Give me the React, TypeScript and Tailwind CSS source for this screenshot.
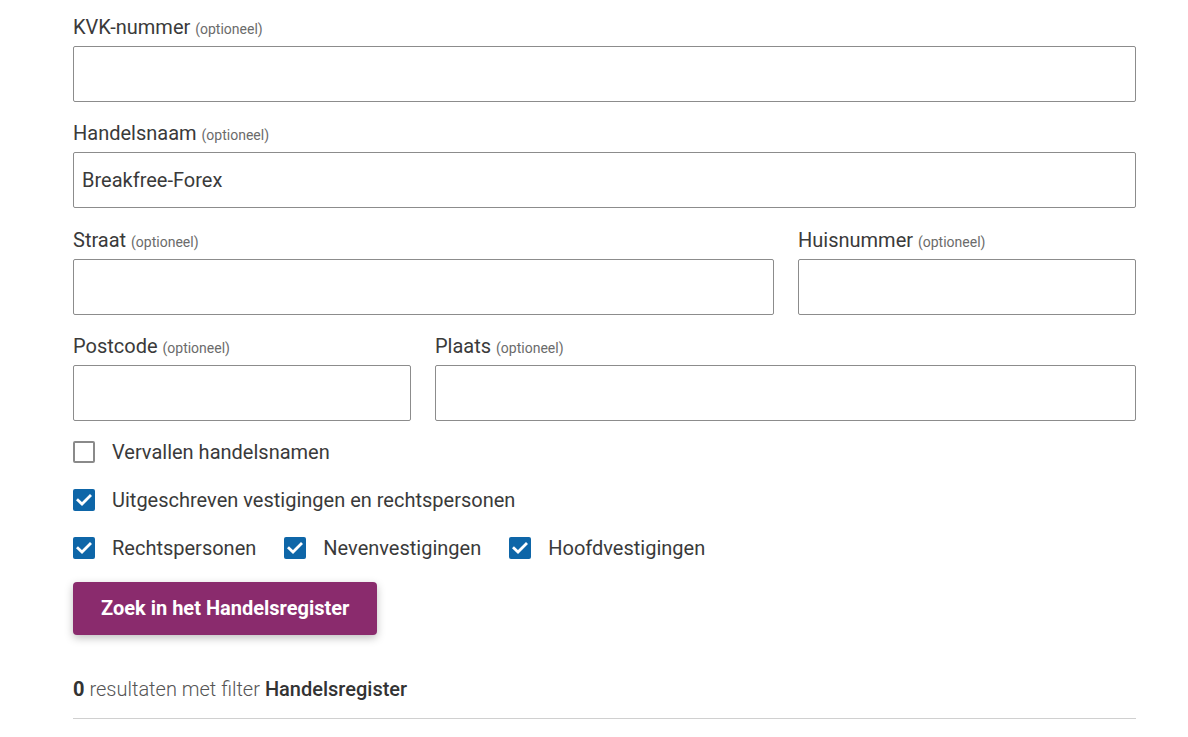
import { useState } from 'react';

const font = { fontFamily: 'Roboto, "Liberation Sans", Arial, sans-serif' };

function Field({ label, value = '' }: { label: string; value?: string }) {
  return (
    <div className="flex flex-col">
      <label className="h-6 leading-6 text-[20px] text-[#3a3a3a]">
        {label} <span className="text-[14px] text-[#6b6b6b]">(optioneel)</span>
      </label>
      <input
        type="text"
        defaultValue={value}
        className="mt-[7px] h-[56px] w-full rounded-[2px] border border-[#8c8c8c] bg-white px-2 text-[20px] text-[#3a3a3a] focus:outline-none"
      />
    </div>
  );
}

function Check({ label, initial }: { label: string; initial: boolean }) {
  const [checked, setChecked] = useState(initial);
  return (
    <button type="button" onClick={() => setChecked(!checked)} className="flex items-center gap-[17px] text-left">
      {checked ? (
        <span className="flex h-[22px] w-[22px] items-center justify-center rounded-[2px] bg-[#0e66a8]">
          <svg width="18" height="18" viewBox="0 0 18 18" fill="none">
            <path d="M3 9.2l4 3.8L15 5" stroke="white" strokeWidth="2.8" strokeLinecap="square" />
          </svg>
        </span>
      ) : (
        <span className="h-[22px] w-[22px] rounded-[2px] border-2 border-[#8a8a8a] bg-white" />
      )}
      <span className="text-[20px] leading-6 text-[#3a3a3a]">{label}</span>
    </button>
  );
}

export default function App() {
  return (
    <div className="min-h-screen bg-white" style={font}>
      <div className="ml-[73px] w-[1063px] pt-[15px]">
        <div className="flex flex-col gap-[19.3px]">
          <Field label="KVK-nummer" />
          <Field label="Handelsnaam" value="Breakfree-Forex" />
          <div className="grid grid-cols-[701px_1fr] gap-x-[24px]">
            <Field label="Straat" />
            <Field label="Huisnummer" />
          </div>
          <div className="grid grid-cols-[338px_1fr] gap-x-[24px]">
            <Field label="Postcode" />
            <Field label="Plaats" />
          </div>
        </div>

        <div className="mt-[19px] flex flex-col gap-[24px]">
          <Check label="Vervallen handelsnamen" initial={false} />
          <Check label="Uitgeschreven vestigingen en rechtspersonen" initial={true} />
          <div className="flex items-center gap-[28px]">
            <Check label="Rechtspersonen" initial={true} />
            <Check label="Nevenvestigingen" initial={true} />
            <Check label="Hoofdvestigingen" initial={true} />
          </div>
        </div>

        <button
          type="button"
          className="mt-[22px] h-[53px] rounded-[4px] bg-[#8a2b6d] px-[28px] text-[20px] font-bold text-white shadow-[0_3px_8px_rgba(0,0,0,0.25)]"
        >
          Zoek in het Handelsregister
        </button>

        <p className="mt-[42px] text-[20px] leading-6 text-[#555]">
          <span className="font-bold text-[#333]">0</span> <span className="font-light">resultaten met filter</span>{' '}
          <span className="font-medium text-[#333]">Handelsregister</span>
        </p>
        <div className="mt-[17px] border-t border-[#d0d0d0]" />
      </div>
    </div>
  );
}
